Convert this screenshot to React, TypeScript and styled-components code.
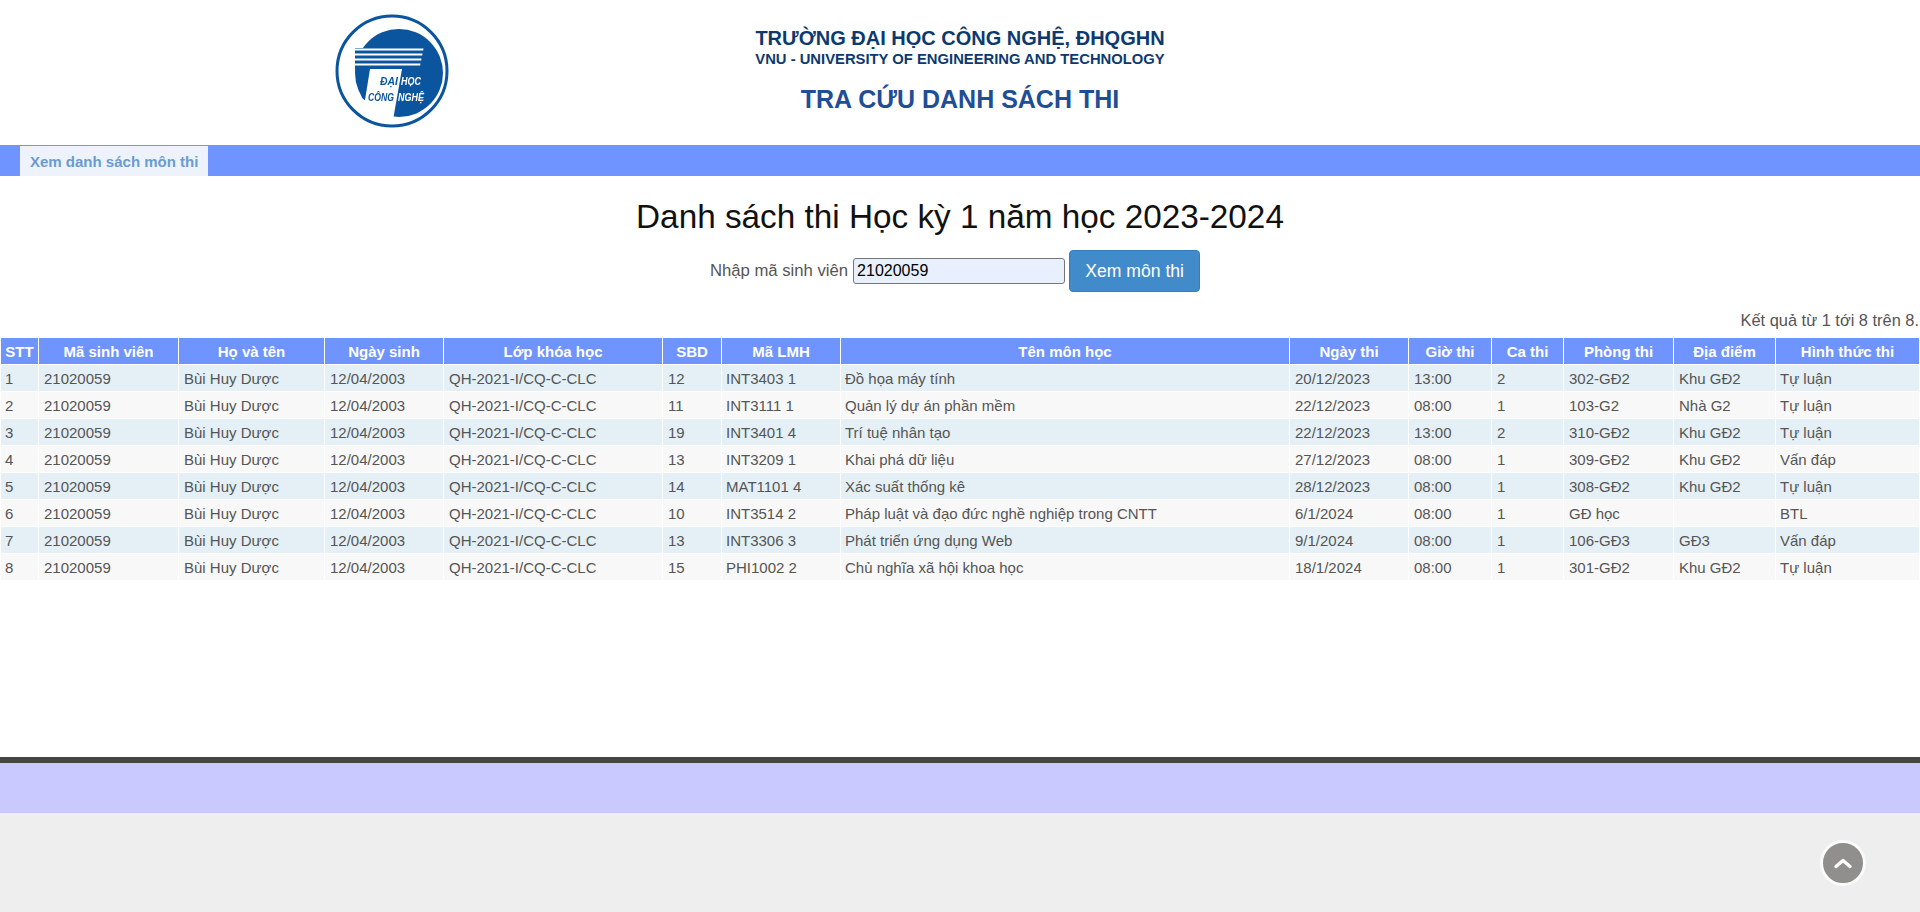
import React from "react";
import styled, { createGlobalStyle } from "styled-components";

const GlobalStyle = createGlobalStyle`
  html, body { margin: 0; padding: 0; background: #eee; }
  body { font-family: "Liberation Sans", Arial, sans-serif; color: #555; font-size: 15px; }
`;

const Page = styled.div`
  position: relative;
  height: 912px;
  overflow: hidden;
`;

const Header = styled.header`
  display: flex;
  height: 145px;
  background: #fff;
  padding: 14px 0 0 335px;
  box-sizing: border-box;
`;

const Logo = styled.svg`
  width: 114px;
  height: 114px;
  flex: none;
  filter: blur(0.4px);
`;

const Brand = styled.div`
  display: flex;
  flex-direction: column;
  align-items: center;
  width: 420px;
  margin-left: 301px;
  padding-top: 13px;
  text-align: center;
  white-space: nowrap;
`;

const School = styled.div`
  font-size: 20px;
  line-height: 23px;
  font-weight: 700;
  color: #0d3a6e;
`;

const SchoolEn = styled.div`
  font-size: 14.8px;
  line-height: 18px;
  font-weight: 700;
  color: #0d3a6e;
`;

const Lookup = styled.div`
  margin-top: 16px;
  font-size: 25px;
  line-height: 30px;
  font-weight: 700;
  color: #1f4e96;
`;

const NavBar = styled.nav`
  display: flex;
  height: 31px;
  padding: 1px 0 0 20px;
  box-sizing: border-box;
  background: #7094ff;
`;

const NavTab = styled.a`
  display: flex;
  align-items: center;
  padding: 0 10px;
  background: #eef3fb;
  color: #6a9bd0;
  font-size: 15px;
  font-weight: 700;
`;

const Main = styled.main`
  height: 581px;
  background: #fff;
  padding-top: 21px;
  box-sizing: border-box;
`;

const Title = styled.h1`
  margin: 0;
  text-align: center;
  font-size: 33.3px;
  line-height: 40px;
  font-weight: 400;
  color: #111;
`;

const SearchForm = styled.form`
  display: flex;
  justify-content: center;
  align-items: center;
  margin-top: 13px;
  padding-right: 10px;
  height: 42px;
  gap: 4px;
`;

const SearchLabel = styled.label`
  font-size: 16.7px;
  color: #555;
`;

const SearchInput = styled.input`
  width: 212px;
  height: 26px;
  box-sizing: border-box;
  margin-left: 1px;
  padding: 1px 2px 1px 3px;
  background: #e8f0fe;
  border: 1px solid #767676;
  border-radius: 3px;
  color: #000;
  font-family: "Liberation Sans", Arial, sans-serif;
  font-size: 16px;
`;

const SearchButton = styled.button`
  width: 131px;
  height: 42px;
  background: #428bca;
  border: 1px solid #357ebd;
  border-radius: 4px;
  color: #fff;
  font-family: "Liberation Sans", Arial, sans-serif;
  font-size: 17.6px;
`;

const ResultInfo = styled.div`
  margin-top: 17px;
  padding-right: 1px;
  text-align: right;
  font-size: 16.4px;
  line-height: 22px;
  color: #555;
`;

const Table = styled.table`
  width: 1920px;
  margin-top: 6px;
  table-layout: fixed;
  border-collapse: separate;
  border-spacing: 1px;
`;

const HeadCell = styled.th`
  height: 26px;
  padding: 1px 2px 0;
  box-sizing: border-box;
  background: #7094ff;
  color: #fff;
  font-size: 15px;
  font-weight: 700;
  text-align: center;
  white-space: nowrap;
`;

const Row = styled.tr<{ $odd: boolean }>`
  background: ${(p) => (p.$odd ? "#e4f0f5" : "#f8f8f8")};
`;

const Cell = styled.td<{ $pad?: number }>`
  height: 26px;
  box-sizing: border-box;
  padding: 1px 0 0 ${(p) => p.$pad ?? 5}px;
  white-space: nowrap;
  overflow: hidden;
`;

const FooterLine = styled.div`
  height: 6px;
  background: #444;
`;

const FooterBand = styled.div`
  height: 50px;
  background: #c9c9ff;
`;

const FooterRest = styled.div`
  height: 99px;
  background: #eee;
`;

const ToTop = styled.a`
  position: absolute;
  left: 1820px;
  top: 840px;
  width: 46px;
  height: 46px;
  box-sizing: border-box;
  display: flex;
  align-items: center;
  justify-content: center;
  border-radius: 50%;
  border: 3px solid #fbfbfb;
  background: #908f8d;
`;

const widths = [37, 139, 145, 118, 218, 58, 118, 448, 118, 82, 71, 109, 101, 143];
const heads = ["STT", "Mã sinh viên", "Họ và tên", "Ngày sinh", "Lớp khóa học", "SBD", "Mã LMH", "Tên môn học", "Ngày thi", "Giờ thi", "Ca thi", "Phòng thi", "Địa điểm", "Hình thức thi"];
const pads = [5, 4, 4, 5, 5, 5, 5, 5, 4];
const rows: string[][] = [
  ["12", "INT3403 1", "Đồ họa máy tính", "20/12/2023", "13:00", "2", "302-GĐ2", "Khu GĐ2", "Tự luận"],
  ["11", "INT3111 1", "Quản lý dự án phần mềm", "22/12/2023", "08:00", "1", "103-G2", "Nhà G2", "Tự luận"],
  ["19", "INT3401 4", "Trí tuệ nhân tạo", "22/12/2023", "13:00", "2", "310-GĐ2", "Khu GĐ2", "Tự luận"],
  ["13", "INT3209 1", "Khai phá dữ liệu", "27/12/2023", "08:00", "1", "309-GĐ2", "Khu GĐ2", "Vấn đáp"],
  ["14", "MAT1101 4", "Xác suất thống kê", "28/12/2023", "08:00", "1", "308-GĐ2", "Khu GĐ2", "Tự luận"],
  ["10", "INT3514 2", "Pháp luật và đạo đức nghề nghiệp trong CNTT", "6/1/2024", "08:00", "1", "GĐ học", "", "BTL"],
  ["13", "INT3306 3", "Phát triển ứng dụng Web", "9/1/2024", "08:00", "1", "106-GĐ3", "GĐ3", "Vấn đáp"],
  ["15", "PHI1002 2", "Chủ nghĩa xã hội khoa học", "18/1/2024", "08:00", "1", "301-GĐ2", "Khu GĐ2", "Tự luận"],
];

const BLUE = "#0b559f";
const logoFont = { fontFamily: "Liberation Sans", fontSize: 10, fontWeight: 700, fontStyle: "italic" } as const;

export default function App() {
  return (
    <Page>
      <GlobalStyle />
      <Header>
        <Logo viewBox="0 0 114 114" aria-label="Logo">
          <circle cx="64" cy="59" r="44" fill={BLUE} />
          <rect x="20" y="34" width="44" height="21" fill={BLUE} />
          <polygon points="20,55 36,55 30,86 27,84" fill={BLUE} />
          <polygon points="35,55 67,55 58,106 10,106 10,86 30,86" fill="#fff" />
          <polygon points="20,34.5 88.5,34.5 88.2,36.5 20,36.5" fill="#fff" />
          <polygon points="20,39.5 87.5,39.5 87.2,41.5 20,41.5" fill="#fff" />
          <polygon points="20,44.5 86.5,44.5 86.2,46.5 20,46.5" fill="#fff" />
          <polygon points="20,49.5 85.5,49.5 85.2,51.5 20,51.5" fill="#fff" />
          <text x="45" y="71" {...logoFont} fill={BLUE} textLength={18} lengthAdjust="spacingAndGlyphs">ĐẠI</text>
          <text x="66" y="71" {...logoFont} fill="#fff" textLength={20} lengthAdjust="spacingAndGlyphs">HỌC</text>
          <text x="33" y="87" {...logoFont} fill={BLUE} textLength={26} lengthAdjust="spacingAndGlyphs">CÔNG</text>
          <text x="63" y="87" {...logoFont} fill="#fff" textLength={26} lengthAdjust="spacingAndGlyphs">NGHỆ</text>
          <circle cx="57" cy="57" r="55" fill="none" stroke={BLUE} strokeWidth="3" />
        </Logo>
        <Brand>
          <School>TRƯỜNG ĐẠI HỌC CÔNG NGHỆ, ĐHQGHN</School>
          <SchoolEn>VNU - UNIVERSITY OF ENGINEERING AND TECHNOLOGY</SchoolEn>
          <Lookup>TRA CỨU DANH SÁCH THI</Lookup>
        </Brand>
      </Header>
      <NavBar>
        <NavTab>Xem danh sách môn thi</NavTab>
      </NavBar>
      <Main>
        <Title>Danh sách thi Học kỳ 1 năm học 2023-2024</Title>
        <SearchForm>
          <SearchLabel>Nhập mã sinh viên</SearchLabel>
          <SearchInput defaultValue="21020059" />
          <SearchButton type="button">Xem môn thi</SearchButton>
        </SearchForm>
        <ResultInfo>Kết quả từ 1 tới 8 trên 8.</ResultInfo>
        <Table>
          <colgroup>
            {widths.map((w, i) => (
              <col key={i} style={{ width: w }} />
            ))}
          </colgroup>
          <thead>
            <tr>
              {heads.map((h) => (
                <HeadCell key={h}>{h}</HeadCell>
              ))}
            </tr>
          </thead>
          <tbody>
            {rows.map((r, i) => (
              <Row key={i} $odd={i % 2 === 0}>
                <Cell $pad={4}>{i + 1}</Cell>
                <Cell>21020059</Cell>
                <Cell>Bùi Huy Dược</Cell>
                <Cell>12/04/2003</Cell>
                <Cell>QH-2021-I/CQ-C-CLC</Cell>
                {r.map((c, j) => (
                  <Cell key={j} $pad={pads[j]}>{c}</Cell>
                ))}
              </Row>
            ))}
          </tbody>
        </Table>
      </Main>
      <FooterLine />
      <FooterBand />
      <FooterRest />
      <ToTop aria-label="Lên đầu trang">
        <svg width="20" height="14" viewBox="0 0 20 14" fill="none">
          <path d="M3 10.5 L10 4.5 L17 10.5" stroke="#fff" strokeWidth="3.4" strokeLinecap="round" strokeLinejoin="round" />
        </svg>
      </ToTop>
    </Page>
  );
}
